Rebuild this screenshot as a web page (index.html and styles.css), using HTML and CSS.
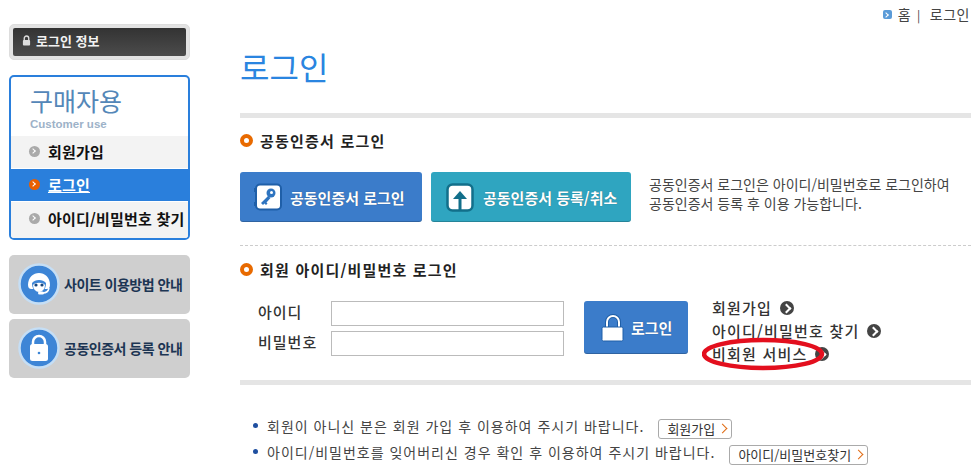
FILE: index.html
```html
<!DOCTYPE html>
<html lang="ko">
<head>
  <meta charset="UTF-8">
  <title>로그인</title>
  <link rel="stylesheet" href="styles.css">
</head>
<body>
  <div class="page">
    <div class="sidebar">
      <div class="login-info">
        <div class="login-info-inner">
          <svg width="9" height="11" viewBox="0 0 10 12"><path d="M2.5 6V3.5a2.5 2.5 0 0 1 5 0V6" fill="none" stroke="#ddd" stroke-width="1.5"/><rect x="1" y="5.5" width="8" height="6" rx="1" fill="#ddd"/></svg>
          <span>로그인 정보</span>
        </div>
      </div>
      <div class="menu-box">
        <div class="menu-title">구매자용</div>
        <div class="menu-sub">Customer use</div>
        <div class="menu-item"><i class="dot"></i>회원가입</div>
        <div class="menu-item active"><i class="dot"></i><span>로그인</span></div>
        <div class="menu-item last"><i class="dot"></i>아이디/비밀번호 찾기</div>
      </div>
      <div class="guide first">
        <svg width="42" height="42" viewBox="0 0 42 42">
          <circle cx="21" cy="21" r="19.500" fill="#3d85d6" stroke="#c5def5" stroke-width="2.500"/>
          <path d="M10 22c0-16 22-16 22 0 0 3-2 4-3 4H13c-1 0-3-1-3-4z" fill="#fff"/>
          <path d="M14 20c3-4 11-4 14 0 0 6-3 9-7 9s-7-3-7-9z" fill="#3d85d6"/>
          <path d="M15 22a6 7 0 0 0 12 0c-2-3-10-3-12 0z" fill="#fff"/>
          <circle cx="18" cy="22" r="1.600" fill="#16457c"/><circle cx="24" cy="22" r="1.600" fill="#16457c"/>
          <path d="M31 25q-1 5-6 5" fill="none" stroke="#fff" stroke-width="1.500"/>
          <rect x="20" y="28.500" width="6" height="3" rx="1.500" fill="#fff"/>
        </svg>
        <span>사이트 이용방법 안내</span>
      </div>
      <div class="guide">
        <svg width="42" height="42" viewBox="0 0 42 42">
          <circle cx="21" cy="21" r="19.500" fill="#3d85d6" stroke="#c5def5" stroke-width="2.500"/>
          <path d="M15 19v-4a6 6 0 0 1 12 0v4" fill="none" stroke="#fff" stroke-width="2.500"/>
          <rect x="12" y="17" width="18" height="17" rx="2.500" fill="#fff"/>
          <circle cx="21" cy="26" r="1.300" fill="#3d85d6"/>
        </svg>
        <span>공동인증서 등록 안내</span>
      </div>
    </div>

    <div class="content">
      <div class="top-links">
        <i class="home-icon"></i><span>홈</span><span class="sep">|</span><span>로그인</span>
      </div>
      <h1 class="page-title">로그인</h1>
      <div class="thick-line"></div>

      <h2 class="section-title"><i class="ring"></i>공동인증서 로그인</h2>
      <div class="cert-row">
        <div class="btn btn-blue cert-login">
          <svg width="28" height="29" viewBox="0 0 28 29">
            <rect x="2" y="1.500" width="25" height="25" rx="4" fill="#fff" stroke="#1f5fa8" stroke-width="2"/>
            <path d="M2 5H0v4h2zM2 19H0v4h2z" fill="#1f5fa8"/>
            <circle cx="17" cy="10" r="4.500" fill="#2e74c0"/>
            <path d="M14 13l-7 7 2 2 1.500-1.500 1.500 1.500 1.500-1.500-1-1 4-4.500z" fill="#2e74c0"/>
            <circle cx="17.500" cy="9.500" r="1.500" fill="#fff"/>
          </svg>
          <span>공동인증서 로그인</span>
        </div>
        <div class="btn btn-teal cert-reg">
          <svg width="28" height="29" viewBox="0 0 28 29">
            <rect x="1.500" y="1.500" width="25" height="26" rx="5" fill="#fff" stroke="#126f8a" stroke-width="2.500"/>
            <path d="M14 8l7 8h-5.500v12h-3V16H7z" fill="#126f8a"/>
          </svg>
          <span>공동인증서 등록/취소</span>
        </div>
        <p class="cert-desc">공동인증서 로그인은 아이디/비밀번호로 로그인하여<br>공동인증서 등록 후 이용 가능합니다.</p>
      </div>
      <div class="dash-line"></div>

      <h2 class="section-title member"><i class="ring"></i>회원 아이디/비밀번호 로그인</h2>
      <div class="login-row">
        <div class="login-form">
          <label class="field"><span>아이디</span><input type="text"></label>
          <label class="field"><span>비밀번호</span><input type="password"></label>
        </div>
        <div class="btn btn-blue login-btn">
          <svg width="24" height="28" viewBox="0 0 24 28">
            <path d="M6 14V8a6 6 0 0 1 12 0v6" fill="none" stroke="#1f5fa8" stroke-width="4"/>
            <path d="M6 14V8a6 6 0 0 1 12 0v6" fill="none" stroke="#fff" stroke-width="2"/>
            <rect x="1" y="13" width="21" height="14" rx="1.500" fill="#fff" stroke="#1f5fa8"/>
          </svg>
          <span>로그인</span>
        </div>
        <ul class="login-links">
          <li>회원가입<i class="go"></i></li>
          <li>아이디/비밀번호 찾기<i class="go"></i></li>
          <li>비회원 서비스<i class="go"></i>
            <svg class="mark" width="124" height="36" viewBox="0 0 124 36"><ellipse cx="61" cy="17" rx="59" ry="14" fill="none" stroke="#e30f1e" stroke-width="4.500"/></svg>
          </li>
        </ul>
      </div>
      <div class="thick-line"></div>

      <ul class="notes">
        <li>회원이 아니신 분은 회원 가입 후 이용하여 주시기 바랍니다.<span class="small-btn">회원가입<i class="chev"></i></span></li>
        <li>아이디/비밀번호를 잊어버리신 경우 확인 후 이용하여 주시기 바랍니다.<span class="small-btn">아이디/비밀번호찾기<i class="chev"></i></span></li>
      </ul>
    </div>
  </div>
</body>
</html>
```

FILE: styles.css
```css
* {
  box-sizing: border-box;
}
body {
  margin: 0;
  background: #fff;
  color: #333;
  font-family: "Noto Sans CJK KR", "Noto Sans", sans-serif;
  font-size: 13px;
  overflow: hidden;
}
.page {
  display: flex;
  width: 976px;
  height: 474px;
}

/* 왼쪽 메뉴 */
.sidebar {
  width: 181px;
  margin-left: 9px;
  padding-top: 24px;
  flex-shrink: 0;
}
.login-info {
  height: 36px;
  padding: 3px;
  border: 1px solid #ddd;
  border-radius: 5px;
  background: #e3e3e3;
}
.login-info-inner {
  display: flex;
  align-items: center;
  gap: 5px;
  height: 100%;
  padding: 0 0 3px 9px;
  border-radius: 2px;
  background: linear-gradient(#333, #4c4c4c);
  color: #f2f2f2;
  font-size: 13px;
  font-weight: 700;
}
.menu-box {
  height: 165px;
  margin-top: 15px;
  border: 2px solid #2a7fdc;
  border-radius: 5px;
  overflow: hidden;
}
.menu-title {
  margin: 5px 0 0 19px;
  height: 36px;
  color: #5487b8;
  font-size: 25px;
  line-height: 36px;
}
.menu-sub {
  margin-left: 19px;
  height: 18px;
  color: #9db2c8;
  font-family: "Liberation Sans", sans-serif;
  font-size: 11.500px;
  font-weight: 700;
  line-height: 13px;
}
.menu-item {
  display: flex;
  align-items: center;
  height: 32px;
  margin-bottom: 1px;
  padding: 0 0 2px 18px;
  background: #f3f3f3;
  color: #111;
  font-size: 15px;
  font-weight: 700;
  letter-spacing: 0.2px;
  white-space: nowrap;
}
.menu-item.last {
  height: 36px;
  margin-bottom: 0;
  padding-bottom: 4px;
}
.menu-item.active {
  background: #2a7fdc;
  color: #fff;
}
.menu-item.active span {
  text-decoration: underline;
}
.dot {
  position: relative;
  width: 11px;
  height: 11px;
  margin-right: 8px;
  border-radius: 50%;
  background: #aaa;
}
.dot::after {
  content: "";
  position: absolute;
  left: 2px;
  top: 3.500px;
  width: 3px;
  height: 3px;
  border-top: 1.500px solid #fff;
  border-right: 1.500px solid #fff;
  transform: rotate(45deg);
}
.active .dot {
  background: #e85f00;
}
.guide {
  display: flex;
  align-items: center;
  gap: 4px;
  height: 59px;
  margin-top: 5px;
  padding: 0 0 2px 9px;
  border-radius: 5px;
  background: #cfcfcf;
  color: #1c3553;
  font-size: 14px;
  font-weight: 700;
  letter-spacing: -0.5px;
  white-space: nowrap;
}
.guide svg {
  flex-shrink: 0;
}
.guide.first {
  margin-top: 15px;
}

/* 본문 */
.content {
  width: 731px;
  margin-left: 50px;
  flex-shrink: 0;
}
.top-links {
  display: flex;
  align-items: center;
  justify-content: flex-end;
  height: 16px;
  margin-top: 6px;
  margin-right: 1px;
  color: #444;
  font-size: 14px;
  letter-spacing: 0.5px;
}
.home-icon {
  position: relative;
  width: 9px;
  height: 9px;
  margin-right: 6px;
  border-radius: 2px;
  background: #5a9bd8;
}
.home-icon::after {
  content: "";
  position: absolute;
  left: 1.500px;
  top: 3px;
  width: 3px;
  height: 3px;
  border-top: 1px solid #fff;
  border-right: 1px solid #fff;
  transform: rotate(45deg);
}
.sep {
  margin: 0 9px 0 6px;
  font-size: 12px;
}
.page-title {
  margin: 21px 0 0;
  height: 47px;
  color: #2a85e0;
  font-size: 32px;
  font-weight: 400;
  line-height: 47px;
}
.thick-line {
  height: 5px;
  margin-top: 0;
  background: #e5e5e5;
}
.page-title + .thick-line {
  margin-top: 23px;
}
.section-title {
  display: flex;
  align-items: center;
  height: 18px;
  margin: 13px 0 0;
  color: #222;
  font-size: 15px;
  font-weight: 700;
  letter-spacing: 1.200px;
}
.section-title.member {
  margin-top: 14px;
}
.ring {
  width: 13px;
  height: 13px;
  margin-right: 7px;
  border: 4px solid #e86a00;
  border-radius: 50%;
  background: #fff;
}
.cert-row {
  display: flex;
  align-items: center;
  height: 50px;
  margin-top: 23px;
}
.btn {
  display: flex;
  align-items: center;
  border-radius: 3px;
  color: #fff;
  font-size: 15px;
  font-weight: 700;
  white-space: nowrap;
  box-shadow: inset 0 -1px 0 rgba(0, 0, 0, .2);
}
.btn span {
  text-shadow: 0 0 1px rgba(0, 0, 0, .4);
}
.btn-blue {
  background: #3b7cca;
}
.btn-teal {
  background: #2fa5c0;
}
.cert-login {
  gap: 8px;
  width: 182px;
  height: 50px;
  padding-left: 14px;
}
.cert-reg {
  gap: 9px;
  width: 200px;
  height: 50px;
  margin-left: 9px;
  padding-left: 15px;
}
.cert-desc {
  margin: 0 0 6px 18px;
  color: #444;
  font-size: 14px;
  line-height: 19px;
  white-space: nowrap;
}
.dash-line {
  margin-top: 23px;
  border-top: 1px dashed #ccc;
}
.login-row {
  display: flex;
  height: 69px;
  margin-top: 23px;
  margin-bottom: 10px;
}
.login-form {
  display: flex;
  flex-direction: column;
  gap: 5px;
  width: 344px;
  padding-left: 18px;
}
.field {
  display: flex;
  align-items: center;
  height: 25px;
  color: #333;
  font-size: 15px;
  font-weight: 500;
  letter-spacing: 1px;
}
.field span {
  width: 73px;
  margin-bottom: 4px;
}
.field input {
  width: 233px;
  height: 25px;
  border: 1px solid #bbb;
  background: #fff;
}
.login-btn {
  gap: 6px;
  width: 104px;
  height: 53px;
  padding-left: 17px;
}
.login-links {
  position: relative;
  margin: -5px 0 0 24px;
  padding: 0;
  list-style: none;
  color: #333;
  font-size: 15px;
  font-weight: 500;
  letter-spacing: 1.200px;
}
.login-links li {
  position: relative;
  display: flex;
  align-items: center;
  height: 23px;
  white-space: nowrap;
}
.go {
  position: relative;
  width: 14px;
  height: 14px;
  margin-left: 8px;
  border-radius: 50%;
  background: #444;
}
.go::after {
  content: "";
  position: absolute;
  left: 2.500px;
  top: 4px;
  width: 5px;
  height: 5px;
  border-top: 2px solid #fff;
  border-right: 2px solid #fff;
  transform: rotate(45deg);
}
.mark {
  position: absolute;
  left: -10px;
  top: -5px;
}
.notes {
  margin: 28px 0 0;
  padding: 0 0 0 27px;
  list-style: none;
  color: #444;
  font-size: 14px;
  letter-spacing: 1px;
}
.notes li {
  position: relative;
  display: flex;
  align-items: center;
  height: 26px;
  white-space: nowrap;
}
.notes li::before {
  content: "";
  position: absolute;
  left: -14px;
  top: 10px;
  width: 5px;
  height: 5px;
  border-radius: 50%;
  background: #1f4fa0;
}
.small-btn {
  display: flex;
  align-items: center;
  height: 20px;
  margin: 5px 0 0 14px;
  padding: 0 5px 0 8px;
  border: 1px solid #aaa;
  border-radius: 3px;
  color: #333;
  font-size: 13px;
  letter-spacing: 0;
}
.chev {
  width: 7px;
  height: 7px;
  margin-left: 4px;
  border-top: 1px solid #e06a10;
  border-right: 1px solid #e06a10;
  transform: rotate(45deg);
}
```
